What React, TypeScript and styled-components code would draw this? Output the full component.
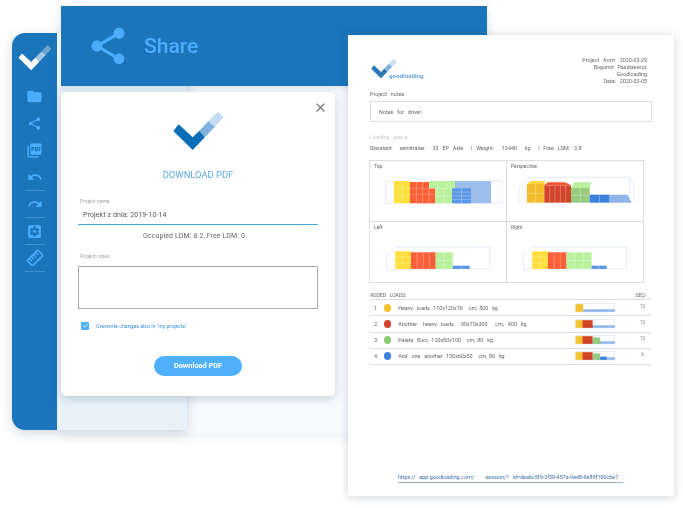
import styled, { createGlobalStyle } from "styled-components";
import { MdClose, MdFolder, MdPictureAsPdf, MdRedo, MdSettingsApplications, MdShare, MdOutlineStraighten, MdUndo, MdCheck } from "react-icons/md";

const Global = createGlobalStyle`
  html, body { margin: 0; padding: 0; background: #fff; overflow: hidden; }
  body { font-family: Roboto, "Liberation Sans", sans-serif; }
`;

const Canvas = styled.div`
  position: relative;
  width: 683px;
  height: 508px;
  overflow: hidden;
  filter: blur(0.25px);
`;

// ---- back window
const BackWindow = styled.div`
  position: absolute;
  left: 61px;
  top: 6px;
  width: 426px;
  height: 427px;
  background: #f7fbfe;
  box-shadow: 0 4px 14px rgba(40, 80, 120, 0.08);
`;
const Header = styled.div`
  position: absolute;
  left: 61px;
  top: 6px;
  width: 426px;
  height: 80px;
  background: #1a75bb;
  display: flex;
  align-items: center;
  gap: 14px;
  padding-left: 25px;
  color: #4baefc;
  box-sizing: border-box;
  box-shadow: 0 2px 6px rgba(40, 70, 100, 0.12);
`;
const HeaderTitle = styled.div`
  font-size: 21px;
  font-weight: 500;
`;

// ---- side bar window
const SideWindow = styled.div`
  position: absolute;
  left: 12px;
  top: 33px;
  width: 175px;
  height: 397px;
  display: flex;
  border-radius: 13px 0 0 13px;
  overflow: hidden;
`;
const SideShadow = styled.div`
  position: absolute;
  left: 12px;
  top: 33px;
  width: 175px;
  height: 397px;
  border-radius: 13px 0 0 13px;
  box-shadow: 0 3px 12px rgba(40, 70, 100, 0.22);
`;
const Sidebar = styled.div`
  width: 45px;
  background: #1a75bb;
  display: flex;
  flex-direction: column;
  align-items: center;
  color: #4baefc;
  padding-top: 11px;
  box-sizing: border-box;
`;
const SidePane = styled.div`
  flex: 1;
  margin-top: 53px;
  background: #e8f2fb;
`;
const SideLogo = styled.div`
  height: 36px;
  margin-bottom: 3px;
`;
const SideItem = styled.div<{ $line?: boolean }>`
  width: 20px;
  height: 27px;
  display: flex;
  align-items: center;
  justify-content: center;
  flex-shrink: 0;
  border-bottom: ${(p) => (p.$line ? "1px solid #3f8fce" : "1px solid transparent")};
  box-sizing: border-box;
`;
const RulerIcon = styled(MdOutlineStraighten)`
  transform: rotate(-45deg);
`;

// ---- modal
const Modal = styled.div`
  position: absolute;
  left: 61px;
  top: 92px;
  width: 274px;
  height: 304px;
  background: #fff;
  border-radius: 5px;
  box-shadow: 0 3px 10px rgba(40, 70, 100, 0.22);
  padding: 18px 17px 0;
  box-sizing: border-box;
  display: flex;
  flex-direction: column;
`;
const CloseBtn = styled.div`
  position: absolute;
  right: 7px;
  top: 8px;
  color: #777;
  display: flex;
`;
const ModalLogo = styled.div`
  display: flex;
  justify-content: center;
`;
const ModalTitle = styled.div`
  margin-top: 16px;
  text-align: center;
  font-size: 9.4px;
  color: #5aa9e6;
  line-height: 14px;
`;
const FieldLabel = styled.div<{ $top: number }>`
  margin-top: ${(p) => p.$top}px;
  font-size: 5px;
  line-height: 7px;
  color: #a5a5a5;
  padding-left: 2px;
`;
const NameInput = styled.div`
  margin-top: 3px;
  height: 16px;
  padding-left: 5px;
  font-size: 7px;
  line-height: 14px;
  letter-spacing: 0.1px;
  color: #555;
  border-bottom: 1px solid #4aa6d8;
`;
const Occupied = styled.div`
  margin-top: 6px;
  padding-right: 8px;
  text-align: center;
  font-size: 7px;
  line-height: 10px;
  letter-spacing: 0.1px;
  color: #666;
`;
const NotesBox = styled.div`
  margin-top: 6px;
  height: 43px;
  border: 1px solid #aaa;
  box-sizing: border-box;
`;
const CheckRow = styled.div`
  margin-top: 13px;
  padding-left: 3px;
  display: flex;
  align-items: center;
  gap: 7px;
  font-size: 5.2px;
  color: #3a90d8;
`;
const CheckBox = styled.div`
  width: 8px;
  height: 8px;
  background: #4fb0fb;
  border-radius: 1px;
  color: #fff;
  display: flex;
  align-items: center;
  justify-content: center;
`;
const DownloadBtn = styled.div`
  margin: 26px auto 0;
  width: 88px;
  height: 20px;
  border-radius: 10px;
  background: #4fb0fb;
  color: #fff;
  font-size: 7.4px;
  font-weight: 700;
  display: flex;
  align-items: center;
  justify-content: center;
`;

// ---- pdf document
const Doc = styled.div`
  position: absolute;
  left: 348px;
  top: 35px;
  width: 326px;
  height: 461px;
  background: #fff;
  box-shadow: 0 1px 9px rgba(40, 60, 80, 0.22);
  padding: 22px 22px 0;
  box-sizing: border-box;
  display: flex;
  flex-direction: column;
  font-size: 5.4px;
  color: #666;
  white-space: pre;
  word-spacing: 0.6px;
  filter: blur(0.25px);
`;
const DocTop = styled.div`
  display: flex;
  justify-content: space-between;
  height: 27px;
`;
const DocBrand = styled.div`
  display: flex;
  align-items: flex-end;
  height: 22px;
`;
const BrandName = styled.div`
  margin: 0 0 -1px -9px;
  font-size: 6.2px;
  line-height: 8px;
  font-weight: 700;
  color: #6ba4d4;
  word-spacing: 0;
`;
const DocMeta = styled.div`
  text-align: right;
  line-height: 7px;
  padding-right: 5px;
`;
const DocLine = styled.div<{ $faint?: boolean; $top?: number }>`
  margin-top: ${(p) => p.$top ?? 0}px;
  line-height: 8px;
  color: ${(p) => (p.$faint ? "#ccc" : "#666")};
`;
const DocNote = styled.div`
  margin-top: 3px;
  height: 21px;
  border: 1px solid #ddd;
  box-sizing: border-box;
  padding-left: 8px;
  display: flex;
  align-items: center;
`;
const Views = styled.div`
  margin-top: 8px;
  margin-left: -1px;
  width: 275px;
  display: grid;
  grid-template-columns: 137px 137px;
  grid-template-rows: 61px 61px;
  border: 1px solid #ddd;
  border-right: 0;
  border-bottom: 0;
`;
const ViewCell = styled.div`
  border-right: 1px solid #ddd;
  border-bottom: 1px solid #ddd;
  display: flex;
  flex-direction: column;
`;
const ViewLabel = styled.div`
  height: 12px;
  flex-shrink: 0;
  padding-left: 4px;
  line-height: 11px;
  font-size: 5px;
  color: #666;
`;
const TableHead = styled.div`
  margin-top: 9px;
  display: flex;
  justify-content: space-between;
  padding-right: 6px;
  line-height: 7px;
  font-size: 5px;
  color: #666;
`;
const LoadRow = styled.div`
  height: 15.25px;
  border-top: 1px solid #ddd;
  display: flex;
  align-items: center;
  box-sizing: content-box;
`;
const RowNo = styled.div`
  width: 14px;
  padding-left: 4px;
  box-sizing: border-box;
`;
const Dot = styled.div<{ $c: string }>`
  width: 8px;
  height: 8px;
  border-radius: 50%;
  background: ${(p) => p.$c};
  margin-right: 7px;
`;
const RowText = styled.div`
  width: 184px;
`;
const RowQty = styled.div`
  margin-left: 17px;
  width: 20px;
  text-align: center;
  font-size: 4.6px;
  color: #777;
  padding-bottom: 3px;
`;
const RowsEnd = styled.div`
  border-top: 1px solid #ddd;
`;
const DocLink = styled.div`
  margin: 109px 0 0 28px;
  width: 225px;
  padding-bottom: 1px;
  line-height: 7px;
  color: #3b6ea8;
  border-bottom: 1px solid #8fb3d6;
`;

function CheckMark({ size, c1, c2, c3 }: { size: number; c1: string; c2: string; c3: string }) {
  return (
    <svg width={size} height={(size * 125) / 165} viewBox="510 330 165 125">
      <polygon fill={c1} points="517,393 533,373 575,412 595,392 612,411 575,450" />
      <polygon fill={c2} points="595,392 622,364 642,380 612,411" />
      <polygon fill={c3} points="622,364 650,335 668,352 642,380" />
    </svg>
  );
}

const YEL = "#ffdf3c";
const RED = "#fb5f37";
const GRN = "#b9f19d";
const BLU = "#5a96e6";

function Block({ x, y, w, h, cols, rows, fill }: { x: number; y: number; w: number; h: number; cols: number; rows: number; fill: string }) {
  const lines = [];
  for (let i = 1; i < cols; i++) {
    const lx = x + (w * i) / cols;
    lines.push(<line key={"c" + i} x1={lx} x2={lx} y1={y} y2={y + h} stroke="#fff" strokeOpacity={0.6} strokeWidth={1.5} />);
  }
  for (let i = 1; i < rows; i++) {
    const ly = y + (h * i) / rows;
    lines.push(<line key={"r" + i} x1={x} x2={x + w} y1={ly} y2={ly} stroke="#fff" strokeOpacity={0.6} strokeWidth={1.5} />);
  }
  return (
    <g>
      <rect x={x} y={y} width={w} height={h} fill={fill} />
      {lines}
    </g>
  );
}

const Outline = { fill: "none", stroke: "#d5e3f2", strokeWidth: 2 };

function TopView() {
  return (
    <svg width={137} height={48} viewBox="30 51 411 144">
      <polyline {...Outline} points="102,76 76,76 76,142 102,142" />
      <polyline {...Outline} points="393,75 425,75 425,85 405,108 425,130 425,142 393,142" />
      <rect x={285} y={75} width={108} height={67} fill="#9bbfea" />
      <Block x={102} y={75} w={48} h={67} cols={2} rows={3} fill={YEL} />
      <Block x={150} y={78} w={57} h={19} cols={3} rows={1} fill={RED} />
      <Block x={150} y={97} w={76} h={19} cols={4} rows={1} fill={RED} />
      <Block x={150} y={116} w={76} h={26} cols={4} rows={1} fill={RED} />
      <Block x={207} y={75} w={78} h={22} cols={3} rows={1} fill={GRN} />
      <Block x={226} y={97} w={50} h={45} cols={2} rows={2} fill={GRN} />
      <Block x={276} y={97} w={57} h={45} cols={2} rows={4} fill={BLU} />
    </svg>
  );
}

function PerspectiveView() {
  return (
    <svg width={137} height={48} viewBox="6 51 411 144">
      <polyline {...Outline} points="42,140 42,98 72,64 374,64 386,84 386,140" />
      <line {...Outline} x1={72} y1={64} x2={62} y2={140} />
      <line {...Outline} x1={374} y1={64} x2={374} y2={116} />
      <polygon fill="#8fb6ea" points="312,116 368,116 380,140 312,140" />
      <Block x={66} y={84} w={52} h={56} cols={2} rows={2} fill="#f2bb2a" />
      <polygon fill="#ffd83f" points="66,84 78,75 122,75 118,84" />
      <Block x={118} y={88} w={80} h={52} cols={5} rows={1} fill="#d2432a" />
      <polygon fill="#f2552f" points="118,88 128,79 180,79 198,88" />
      <Block x={198} y={96} w={56} h={44} cols={2} rows={2} fill="#97cc7f" />
      <polygon fill="#b9f19d" points="198,96 208,79 260,79 254,96" />
      <Block x={254} y={116} w={58} h={24} cols={2} rows={1} fill="#3d80dd" />
    </svg>
  );
}

function SideView({ mirror }: { mirror?: boolean }) {
  const viewBox = mirror ? "6 234 411 147" : "30 234 411 147";
  const dx = mirror ? -24 : 0;
  return (
    <svg width={137} height={49} viewBox={viewBox}>
      <polyline {...Outline} points={`${102 + dx},274 ${392 + dx},274 ${392 + dx},341 ${76 + dx},341 ${76 + dx},296 ${102 + dx},274`} />
      <Block x={103 + dx} y={287} w={48} h={54} cols={2} rows={3} fill={YEL} />
      {mirror ? (
        <>
          <Block x={127} y={290} w={57} h={51} cols={3} rows={1} fill={RED} />
          <Block x={184} y={290} w={77} h={51} cols={3} rows={2} fill={GRN} />
          <Block x={261} y={331} w={46} h={10} cols={2} rows={1} fill={BLU} />
        </>
      ) : (
        <>
          <Block x={151} y={290} w={76} h={51} cols={4} rows={1} fill={RED} />
          <Block x={227} y={290} w={52} h={51} cols={2} rows={2} fill={GRN} />
          <Block x={279} y={331} w={52} h={10} cols={2} rows={1} fill={BLU} />
        </>
      )}
    </svg>
  );
}

function Thumb({ level }: { level: number }) {
  return (
    <svg width={45} height={12} viewBox="0 0 135 36">
      <polyline {...Outline} points="4,26 4,10 14,3 132,3 132,30 4,30" />
      <rect x={32} y={22} width={100} height={8} fill="#8fb6ea" />
      <rect x={8} y={6} width={24} height={24} fill="#f2c32f" />
      {level > 0 && <rect x={30} y={6} width={32} height={24} fill="#d2432a" />}
      {level > 1 && <rect x={62} y={10} width={24} height={20} fill="#97cc7f" />}
      {level > 2 && <rect x={86} y={20} width={20} height={10} fill="#3d80dd" />}
    </svg>
  );
}

const loads = [
  { text: "Heavy  loads ·110x120x70   cm, 500  kg", color: "#f5c02d", qty: "12" },
  { text: "Another   heavy  loads  · 90x70x300    cm,  400  kg", color: "#d2432a", qty: "12" },
  { text: "Paleta  Euro ·120x80x100   cm, 80  kg", color: "#8ccb74", qty: "12" },
  { text: "And  one  another ·150x60x50   cm, 80  kg", color: "#3d80dd", qty: "6" },
];

export default function App() {
  return (
    <Canvas>
      <Global />
      <BackWindow />
      <SideShadow />
      <SideWindow>
        <Sidebar>
          <SideLogo>
            <CheckMark size={36} c1="#ffffff" c2="#a6c8e6" c3="#6fa3d0" />
          </SideLogo>
          <SideItem><MdFolder size={17} /></SideItem>
          <SideItem><MdShare size={15} /></SideItem>
          <SideItem><MdPictureAsPdf size={17} /></SideItem>
          <SideItem $line><MdUndo size={16} /></SideItem>
          <SideItem $line><MdRedo size={16} /></SideItem>
          <SideItem $line><MdSettingsApplications size={17} /></SideItem>
          <SideItem $line><RulerIcon size={18} /></SideItem>
        </Sidebar>
        <SidePane />
      </SideWindow>
      <Header>
        <MdShare size={44} />
        <HeaderTitle>Share</HeaderTitle>
      </Header>

      <Modal>
        <CloseBtn><MdClose size={15} /></CloseBtn>
        <ModalLogo>
          <CheckMark size={55} c1="#0a6fb8" c2="#7fb2de" c3="#c5dcf3" />
        </ModalLogo>
        <ModalTitle>DOWNLOAD PDF</ModalTitle>
        <FieldLabel $top={16}>Project name</FieldLabel>
        <NameInput>Projekt z dnia: 2019-10-14</NameInput>
        <Occupied>Occupied LDM: 8.2, Free LDM: 0</Occupied>
        <FieldLabel $top={12}>Project notes:</FieldLabel>
        <NotesBox />
        <CheckRow>
          <CheckBox><MdCheck size={7} /></CheckBox>
          Overwrite changes also in "my projects"
        </CheckRow>
        <DownloadBtn>Download PDF</DownloadBtn>
      </Modal>

      <Doc>
        <DocTop>
          <DocBrand>
            <CheckMark size={28} c1="#2a78b8" c2="#7fb2de" c3="#c5dcf3" />
            <BrandName>goodloading</BrandName>
          </DocBrand>
          <DocMeta>
            <div>Project  from:  2020-03-29</div>
            <div>Bogumił  Paszkiewicz</div>
            <div>Goodloading</div>
            <div>Data:  2020-03-05</div>
          </DocMeta>
        </DocTop>
        <DocLine $top={6}>Project  notes:</DocLine>
        <DocNote>Notes  for  driver</DocNote>
        <DocLine $faint $top={11}>Loading  space:</DocLine>
        <DocLine $top={3}>Standard    semitrailer    33  EP  Axle    |  Weight:    13440    kg    |  Free  LDM:  3.8</DocLine>
        <Views>
          <ViewCell><ViewLabel>Top</ViewLabel><TopView /></ViewCell>
          <ViewCell><ViewLabel>Perspective</ViewLabel><PerspectiveView /></ViewCell>
          <ViewCell><ViewLabel>Left</ViewLabel><SideView /></ViewCell>
          <ViewCell><ViewLabel>Right</ViewLabel><SideView mirror /></ViewCell>
        </Views>
        <TableHead><span>ADDED  LOADS:</span><span>SEQ:</span></TableHead>
        <div>
          {loads.map((l, i) => (
            <LoadRow key={l.text}>
              <RowNo>{i + 1}.</RowNo>
              <Dot $c={l.color} />
              <RowText>{l.text}</RowText>
              <Thumb level={i} />
              <RowQty>{l.qty}</RowQty>
            </LoadRow>
          ))}
          <RowsEnd />
        </div>
        <DocLink>https://  app.goodloading.com/      session/?  id=dea6c5f9-2f50-457a-9ed8-9e89f100c6e7</DocLink>
      </Doc>
    </Canvas>
  );
}
